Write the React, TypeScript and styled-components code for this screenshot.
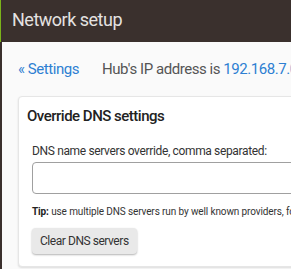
import React from "react";
import styled, {createGlobalStyle} from "styled-components";

const GlobalStyle = createGlobalStyle`
  html, body {
    margin: 0;
    padding: 0;
    background: #fafafa;
    overflow: hidden;
  }
  body {
    font-family: Roboto, "Liberation Sans", sans-serif;
  }
`;

export default function App(): JSX.Element {
    return (
        <>
            <GlobalStyle />
            <Layout>
                <SideEdge />
                <Main>
                    <Header>
                        <HeaderTitle>Network setup</HeaderTitle>
                    </Header>
                    <Content>
                        <NavRow>
                            <BackLink href="#">« Settings</BackLink>
                            <HubInfo>
                                Hub's IP address is <IpLink href="#">192.168.7.0</IpLink>
                            </HubInfo>
                        </NavRow>
                        <Card>
                            <CardTitle>Override DNS settings</CardTitle>
                            <CardBody>
                                <Label>DNS name servers override, comma separated:</Label>
                                <TextInput type="text" />
                                <Tip>
                                    <b>Tip:</b> use multiple DNS servers run by well known providers, for example
                                </Tip>
                                <Button>Clear DNS servers</Button>
                            </CardBody>
                        </Card>
                    </Content>
                </Main>
            </Layout>
        </>
    )
}

const Layout = styled.div`
  display: flex;
  min-height: 269px;
`;

const SideEdge = styled.div`
  position: relative;
  width: 2px;
  flex: 0 0 2px;
  background: #3a302d;

  &::before {
    content: '';
    position: absolute;
    left: 0;
    top: 0;
    width: 1px;
    height: 42px;
    background: #7bb31a;
  }
`;

const Main = styled.div`
  flex: 1;
  min-width: 560px;
  display: flex;
  flex-direction: column;
`;

const Header = styled.div`
  height: 42px;
  background: #3a302d;
  display: flex;
  align-items: center;
  padding-left: 10px;
  padding-bottom: 3px;
  box-sizing: border-box;
`;

const HeaderTitle = styled.h1`
  margin: 0;
  font-size: 18px;
  letter-spacing: -0.5px;
  font-weight: 400;
  color: #e4e2e1;
`;

const Content = styled.div`
  padding: 18px 16px 0 16px;
`;

const NavRow = styled.div`
  display: flex;
  align-items: center;
  gap: 23px;
  font-size: 15px;
  letter-spacing: -0.45px;
  line-height: 19px;
`;

const BackLink = styled.a`
  color: #2d7fd2;
  text-decoration: none;
`;

const HubInfo = styled.span`
  color: #555555;
  white-space: nowrap;
`;

const IpLink = styled.a`
  color: #2d7fd2;
  text-decoration: none;
`;

const Card = styled.div`
  margin-top: 17px;
  background: #ffffff;
  border: 1px solid #e6e6e6;
  border-radius: 4px;
  box-shadow: 0 1px 2px rgba(0, 0, 0, 0.12);
`;

const CardTitle = styled.h2`
  margin: 0;
  padding: 10px 8px 8px 8px;
  font-size: 15px;
  letter-spacing: -0.5px;
  line-height: 19px;
  font-weight: 500;
  color: #222222;
`;

const CardBody = styled.div`
  padding: 10px 13px 12px 13px;
  display: flex;
  flex-direction: column;
  align-items: flex-start;
`;

const Label = styled.label`
  font-size: 12px;
  letter-spacing: -0.35px;
  line-height: 14px;
  color: #333333;
  margin-bottom: 4px;
`;

const TextInput = styled.input`
  width: 100%;
  height: 32px;
  box-sizing: border-box;
  border: 1px solid #a0a0a0;
  border-radius: 4px;
  background: #ffffff;
`;

const Tip = styled.p`
  margin: 12px 0 0 0;
  font-size: 10px;
  letter-spacing: -0.12px;
  line-height: 12px;
  color: #333333;
  white-space: nowrap;

  b {
    font-weight: 700;
    color: #222222;
  }
`;

const Button = styled.button`
  margin-top: 10px;
  height: 26px;
  padding: 0 8px;
  font-family: Roboto, "Liberation Sans", sans-serif;
  font-size: 12px;
  letter-spacing: -0.45px;
  color: #333333;
  background: #e9e9e9;
  border: none;
  border-radius: 4px;
  box-shadow: 0 1px 2px rgba(0, 0, 0, 0.3);
`;
